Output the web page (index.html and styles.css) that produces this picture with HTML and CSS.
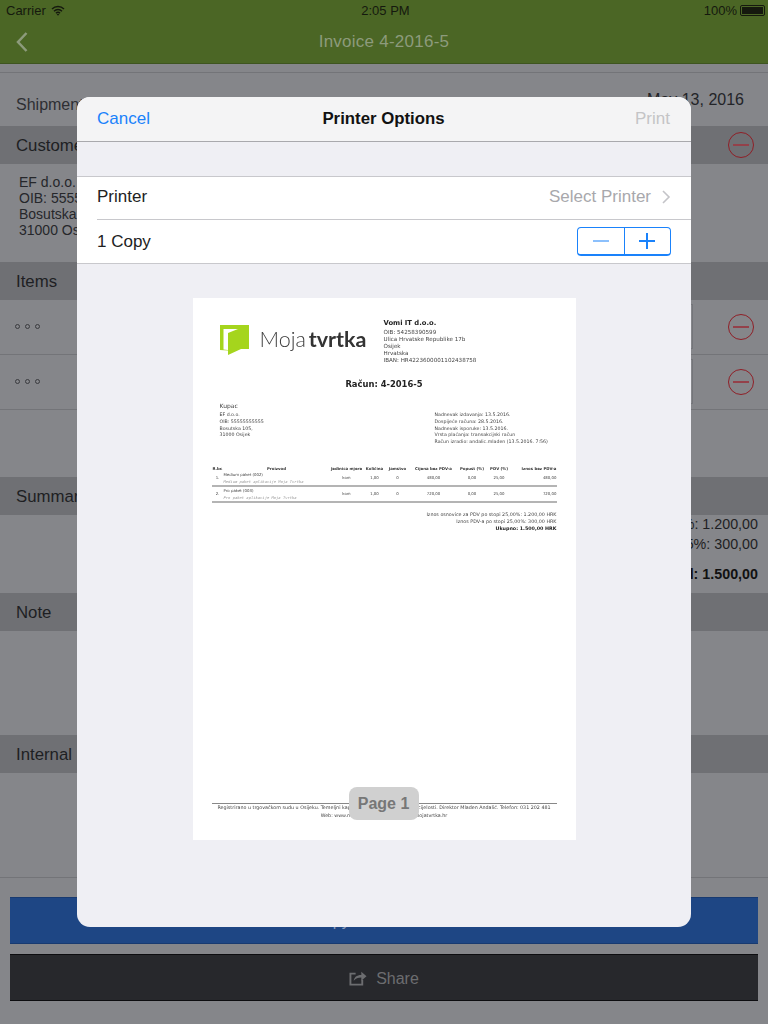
FILE: index.html
```html
<!DOCTYPE html>
<html lang="en">
<head>
    <meta charset="UTF-8">
    <meta name="viewport" content="width=device-width, initial-scale=1.0">
    <title>Invoice 4-2016-5</title>
    <link rel="stylesheet" href="styles.css">
</head>
<body>
    <div class="app">
        <div class="status-bar">
            <div class="status-left">
                <span>Carrier</span>
                <svg width="14" height="11" viewBox="0 0 14 11"><path d="M1 4a8.500 8.500 0 0 1 12 0M3 6.200a5.500 5.500 0 0 1 8 0M5 8.200a2.700 2.700 0 0 1 4 0" fill="none" stroke="#15190e" stroke-width="1.400"/><path d="M7 10.800l-1.300-1.500a2 2 0 0 1 2.600 0z" fill="#15190e"/></svg>
            </div>
            <div class="status-time">2:05 PM</div>
            <div class="status-right">
                <span>100%</span>
                <span class="battery"><span class="battery-fill"></span></span>
            </div>
        </div>
        <div class="nav-bar">
            <svg class="nav-back" width="12" height="20" viewBox="0 0 12 20"><path d="M10.500 1L2 10l8.500 9" fill="none" stroke="#8d9b7c" stroke-width="2.500"/></svg>
            <h1>Invoice 4-2016-5</h1>
        </div>

        <div class="shipment">
            <span class="shipment-label">Shipment date</span>
            <span class="shipment-date">May 13, 2016</span>
        </div>

        <div class="section-head">
            <span>Customer</span>
            <svg class="remove" width="28" height="28" viewBox="0 0 28 28"><circle cx="14" cy="14" r="12.500" fill="none" stroke="#8f1f27" stroke-width="1"/><path d="M6 14h16" stroke="#94414a" stroke-width="2"/></svg>
        </div>
        <div class="customer">
            EF d.o.o.<br>
            OIB: 55555555555<br>
            Bosutska 105,<br>
            31000 Osijek
        </div>

        <div class="section-head"><span>Items</span></div>
        <div class="item-row">
            <span class="dots"><i></i><i></i><i></i></span>
            <span class="qty-box"></span>
            <svg class="remove" width="28" height="28" viewBox="0 0 28 28"><circle cx="14" cy="14" r="12.500" fill="none" stroke="#8f1f27" stroke-width="1"/><path d="M6 14h16" stroke="#94414a" stroke-width="2"/></svg>
        </div>
        <div class="item-row">
            <span class="dots"><i></i><i></i><i></i></span>
            <span class="qty-box"></span>
            <svg class="remove" width="28" height="28" viewBox="0 0 28 28"><circle cx="14" cy="14" r="12.500" fill="none" stroke="#8f1f27" stroke-width="1"/><path d="M6 14h16" stroke="#94414a" stroke-width="2"/></svg>
        </div>
        <div class="items-gap"></div>

        <div class="section-head"><span>Summary</span></div>
        <div class="summary">
            <div>Base 25%: 1.200,00</div>
            <div>VAT 25%: 300,00</div>
            <div class="summary-total">Total: 1.500,00</div>
        </div>

        <div class="section-head"><span>Note</span></div>
        <div class="note"></div>

        <div class="section-head"><span>Internal</span></div>
        <div class="note note-last"></div>

        <div class="actions">
            <button class="btn btn-blue">Copy to new invoice</button>
            <button class="btn btn-dark">
                <svg width="18" height="16" viewBox="0 0 19 18" preserveAspectRatio="none"><path d="M7 4H1.500v12.500H14V11" fill="none" stroke="#6c6d70" stroke-width="2"/><path d="M5 12c.5-4 3-6.500 8-6.500V2l5.500 5-5.500 5V8.500c-3.500 0-6 1-8 3.500z" fill="#6c6d70"/></svg>
                <span class="btn-label">Share</span>
            </button>
        </div>
    </div>

    <div class="modal">
        <div class="modal-head">
            <span class="modal-cancel">Cancel</span>
            <span class="modal-title">Printer Options</span>
            <span class="modal-print">Print</span>
        </div>
        <div class="option-list">
            <div class="option">
                <span>Printer</span>
                <span class="option-value">
                    Select Printer
                    <svg width="9" height="14" viewBox="0 0 9 14"><path d="M1 1l6 6-6 6" fill="none" stroke="#c4c4c8" stroke-width="1.600"/></svg>
                </span>
            </div>
            <div class="option">
                <span>1 Copy</span>
                <span class="stepper">
                    <span class="step step-off"><svg width="16" height="2" viewBox="0 0 16 2"><path d="M0 1h16" stroke="#8cc0fc" stroke-width="2"/></svg></span>
                    <span class="step"><svg width="16" height="16" viewBox="0 0 16 16"><path d="M0 8h16M8 0v16" stroke="#1a82fb" stroke-width="2"/></svg></span>
                </span>
            </div>
        </div>

        <div class="preview">
            <div class="sheet">
                <div class="doc">
                    <div class="doc-top">
                        <div class="doc-logo">
                            <svg width="29" height="31" viewBox="0 0 29 31"><path d="M0 0h29v24h-8L8 30v-4.500L0 25z" fill="#a5d51d"/><path d="M3.500 4H18L8 8v17l-4.500-.5z" fill="#fff"/></svg>
                            <span class="logo-text">Moja <b>tvrtka</b></span>
                        </div>
                        <div class="doc-company">
                            <strong>Vomi IT d.o.o.</strong>
                            <div>OIB: 54258390599</div>
                            <div>Ulica Hrvatske Republike 17b</div>
                            <div>Osijek</div>
                            <div>Hrvatska</div>
                            <div>IBAN: HR4223600001102438758</div>
                        </div>
                    </div>
                    <div class="doc-title">Račun: 4-2016-5</div>
                    <div class="doc-info">
                        <div class="doc-buyer">
                            <div class="doc-buyer-head">Kupac</div>
                            <div>EF d.o.o.</div>
                            <div>OIB: 55555555555</div>
                            <div>Bosutska 105,</div>
                            <div>31000 Osijek</div>
                        </div>
                        <div class="doc-dates">
                            <div>Nadnevak izdavanja: 13.5.2016.</div>
                            <div>Dospijeće računa: 28.5.2016.</div>
                            <div>Nadnevak isporuke: 13.5.2016.</div>
                            <div>Vrsta plaćanja: transakcijski račun</div>
                            <div>Račun izradio: andalic.mladen (13.5.2016. 7:56)</div>
                        </div>
                    </div>
                    <table class="doc-table">
                        <colgroup>
                            <col class="c-no"><col class="c-name"><col class="c-unit"><col class="c-qty"><col class="c-war"><col class="c-price"><col class="c-disc"><col class="c-vat"><col class="c-sum">
                        </colgroup>
                        <thead>
                            <tr><th>R.br.</th><th>Proizvod</th><th>Jedinica mjere</th><th>Količina</th><th>Jamstvo</th><th>Cijena bez PDV-a</th><th>Popust (%)</th><th>PDV (%)</th><th class="num">Iznos bez PDV-a</th></tr>
                        </thead>
                        <tbody>
                            <tr>
                                <td>1.</td>
                                <td class="name">Medium paket (002)<em>Medium paket aplikacije Moja Tvrtka</em></td>
                                <td>kom</td><td>1,00</td><td>0</td><td>480,00</td><td>0,00</td><td>25,00</td><td class="num">480,00</td>
                            </tr>
                            <tr>
                                <td>2.</td>
                                <td class="name">Pro paket (003)<em>Pro paket aplikacije Moja Tvrtka</em></td>
                                <td>kom</td><td>1,00</td><td>0</td><td>720,00</td><td>0,00</td><td>25,00</td><td class="num">720,00</td>
                            </tr>
                        </tbody>
                    </table>
                    <div class="doc-totals">
                        <div>Iznos osnovice za PDV po stopi 25,00%: 1.200,00 HRK</div>
                        <div>Iznos PDV-a po stopi 25,00%: 300,00 HRK</div>
                        <strong>Ukupno: 1.500,00 HRK</strong>
                    </div>
                    <div class="doc-footer">
                        <div>Registrirano u trgovačkom sudu u Osijeku. Temeljni kapital 20.000,00 kn uplaćen u cijelosti. Direktor Mladen Andalić. Telefon: 031 202 481</div>
                        <div>Web: www.mojatvrtka.hr, e-mail: info@mojatvrtka.hr</div>
                    </div>
                </div>
                <div class="page-badge">Page 1</div>
            </div>
        </div>
    </div>
</body>
</html>
```

FILE: styles.css
```css
* {
    box-sizing: border-box;
}
body {
    margin: 0;
    width: 768px;
    height: 1024px;
    overflow: hidden;
    position: relative;
    font-family: 'Liberation Sans', Arial, sans-serif;
    background: #85868a;
    color: #232428;
}

/* app behind the dialog, already dimmed */
.app {
    height: 1024px;
    display: flex;
    flex-direction: column;
}
.status-bar {
    height: 20px;
    background: #4b6625;
    color: #15190e;
    font-size: 13px;
    padding: 0 3px 0 6px;
    display: grid;
    grid-template-columns: 1fr auto 1fr;
    align-items: center;
}
.status-left {
    display: flex;
    align-items: center;
    gap: 5px;
}
.status-right {
    display: flex;
    justify-content: flex-end;
    align-items: center;
    gap: 3px;
}
.battery {
    width: 25px;
    height: 11px;
    border: 1px solid #15190e;
    border-radius: 2px;
    padding: 1px;
    display: block;
}
.battery-fill {
    display: block;
    height: 100%;
    background: #15190e;
}
.nav-bar {
    height: 44px;
    background: #4b6625;
    border-bottom: 1px solid #3e5520;
    display: flex;
    align-items: center;
    justify-content: center;
    position: relative;
}
.nav-bar h1 {
    margin: 0;
    font-size: 17px;
    font-weight: normal;
    color: #8d9b7c;
    letter-spacing: 0.25px;
}
.nav-back {
    position: absolute;
    left: 16px;
    top: 12px;
}
.shipment {
    height: 62px;
    padding: 0 24px 0 16px;
    display: flex;
    justify-content: space-between;
    font-size: 16px;
    box-shadow: inset 0 8px 0 #85868a, inset 0 9px 0 #737478;
}
.shipment-label {
    margin-top: 32px;
    color: #2e2f33;
}
.shipment-date {
    margin-top: 27px;
    color: #232428;
}
.section-head {
    height: 38px;
    flex: none;
    background: #6f7074;
    padding: 2px 13px 0 16px;
    display: flex;
    justify-content: space-between;
    align-items: center;
    font-size: 16.800px;
    color: #1e1f23;
}
.section-head .remove {
    margin-top: -2px;
}
.customer {
    height: 98px;
    padding: 10px 19px;
    font-size: 14px;
    line-height: 16px;
    color: #26272b;
}
.item-row {
    height: 55px;
    padding: 0 13px 1px 15px;
    border-bottom: 1px solid #737478;
    display: flex;
    align-items: center;
    justify-content: space-between;
    position: relative;
}
.dots {
    display: flex;
    gap: 5px;
}
.dots i {
    width: 5px;
    height: 5px;
    border: 1px solid #3a3b3f;
    border-radius: 50%;
}
.qty-box {
    position: absolute;
    right: 75px;
    top: 4px;
    width: 60px;
    height: 45px;
    border: 1px solid #74757a;
}
.items-gap {
    height: 67px;
}
.summary {
    height: 78px;
    padding: 1px 10px 0;
    text-align: right;
    font-size: 14.300px;
    color: #1e1f23;
}
.summary div {
    line-height: 17px;
}
.summary div + div {
    margin-top: 3px;
}
.summary .summary-total {
    margin-top: 13px;
    font-weight: bold;
    color: #111;
}
.note {
    height: 104px;
}
.note-last {
    height: 105px;
    border-bottom: 1px solid #737478;
}
.actions {
    padding: 19px 10px 0;
    display: flex;
    flex-direction: column;
    gap: 10px;
}
.btn {
    height: 47px;
    border: 0;
    font-family: inherit;
    font-size: 16px;
    display: flex;
    justify-content: center;
    align-items: center;
    gap: 9px;
}
.btn-label {
    margin-top: 3px;
}
.btn-blue {
    background: #1e4684;
    border-top: 1px solid #183a70;
    border-bottom: 1px solid #183a70;
    color: #8b9dbc;
}
.btn-dark {
    background: #27282c;
    border-top: 1px solid #0d0d10;
    border-bottom: 1px solid #0d0d10;
    color: #6c6d70;
}

/* print dialog */
.modal {
    position: absolute;
    left: 77px;
    top: 97px;
    width: 614px;
    height: 830px;
    background: #efeff4;
    border-radius: 13px;
    overflow: hidden;
}
.modal-head {
    height: 45px;
    background: #f4f4f5;
    border-bottom: 1px solid #a9a9ad;
    padding: 0 21px 0 20px;
    display: grid;
    grid-template-columns: 1fr auto 1fr;
    align-items: center;
    font-size: 17px;
}
.modal-cancel {
    color: #1a82fb;
}
.modal-title {
    font-size: 16.800px;
    font-weight: bold;
    color: #111;
}
.modal-print {
    text-align: right;
    color: #c4c4c6;
}
.option-list {
    margin-top: 34px;
    padding-left: 20px;
    background: #fff;
    border-top: 1px solid #c8c8cc;
    border-bottom: 1px solid #c8c8cc;
}
.option {
    height: 42px;
    padding: 0 20px 2px 0;
    display: flex;
    justify-content: space-between;
    align-items: center;
    font-size: 17px;
    color: #222;
}
.option + .option {
    height: 44px;
    padding-bottom: 0;
    border-top: 1px solid #c8c8cc;
}
.option-value {
    display: flex;
    align-items: center;
    gap: 11px;
    color: #a8a8ac;
}
.stepper {
    width: 94px;
    height: 29px;
    border: 1px solid #1a82fb;
    border-bottom-width: 2px;
    border-radius: 4px;
    display: flex;
}
.step {
    flex: 1;
    display: flex;
    align-items: center;
    justify-content: center;
}
.step-off {
    border-right: 1px solid #1a82fb;
}
.preview {
    padding-top: 34px;
    display: flex;
    justify-content: center;
}

/* invoice sheet */
.sheet {
    width: 383px;
    height: 542px;
    background: #fff;
    position: relative;
}
.doc {
    height: 100%;
    padding: 16px 19px 0;
    position: relative;
    filter: blur(0.3px);
    font-family: 'DejaVu Sans', sans-serif;
    font-size: 4.700px;
    line-height: 6.800px;
    color: #444;
}
.doc-top {
    display: flex;
    padding-left: 8px;
}
.doc-logo {
    width: 164px;
    height: 52px;
    display: flex;
    align-items: center;
    gap: 11px;
}
.logo-text {
    margin-top: -2px;
    font-family: Lato, sans-serif;
    font-size: 21.500px;
    font-weight: 300;
    line-height: 28px;
    word-spacing: -3px;
    color: #3c3c3c;
}
.logo-text b {
    font-weight: 700;
    color: #333;
}
.doc-company {
    padding-top: 4px;
    font-size: 5.600px;
    line-height: 7.100px;
}
.doc-company strong {
    display: block;
    font-size: 6.800px;
    line-height: 11px;
    color: #222;
}
.doc-title {
    margin-top: 12px;
    text-align: center;
    font-size: 8.400px;
    line-height: 12px;
    font-weight: bold;
    color: #222;
}
.doc-info {
    margin-top: 11px;
    padding-left: 8px;
    display: flex;
}
.doc-buyer {
    width: 215px;
}
.doc-buyer-head {
    margin-bottom: 2px;
    font-size: 6px;
    line-height: 9px;
}
.doc-dates {
    padding-top: 11px;
}
.doc-table {
    width: 345px;
    margin-top: 20px;
    table-layout: fixed;
    border-collapse: collapse;
    font-size: 3.900px;
    line-height: 7px;
}
.c-no { width: 12px; }
.c-name { width: 106px; }
.c-unit { width: 34px; }
.c-qty { width: 22px; }
.c-war { width: 24px; }
.c-price { width: 48px; }
.c-disc { width: 29px; }
.c-vat { width: 25px; }
.doc-table th {
    padding: 0;
    line-height: 5px;
    font-weight: bold;
    color: #333;
    white-space: nowrap;
}
.doc-table td {
    padding: 0;
    text-align: center;
    border-bottom: 2px solid #b4b4b4;
}
.doc-table td.name {
    text-align: left;
    white-space: nowrap;
}
.doc-table td em {
    display: block;
    font-family: 'DejaVu Sans Mono', monospace;
    font-size: 3.800px;
    color: #999;
}
.doc-table .num {
    text-align: right;
}
.doc-totals {
    margin-top: 8px;
    text-align: right;
    font-size: 4.800px;
    line-height: 7px;
}
.doc-totals strong {
    color: #222;
}
.doc-footer {
    position: absolute;
    left: 19px;
    top: 505px;
    width: 345px;
    border-top: 1px solid #888;
    text-align: center;
    line-height: 7.500px;
    font-size: 4.800px;
    white-space: nowrap;
    color: #444;
}
.page-badge {
    position: absolute;
    left: 156px;
    top: 489px;
    width: 70px;
    height: 33px;
    border-radius: 8px;
    background: #d0d0d0;
    color: #777;
    font-size: 16px;
    font-weight: bold;
    line-height: 33px;
    text-align: center;
}
```
